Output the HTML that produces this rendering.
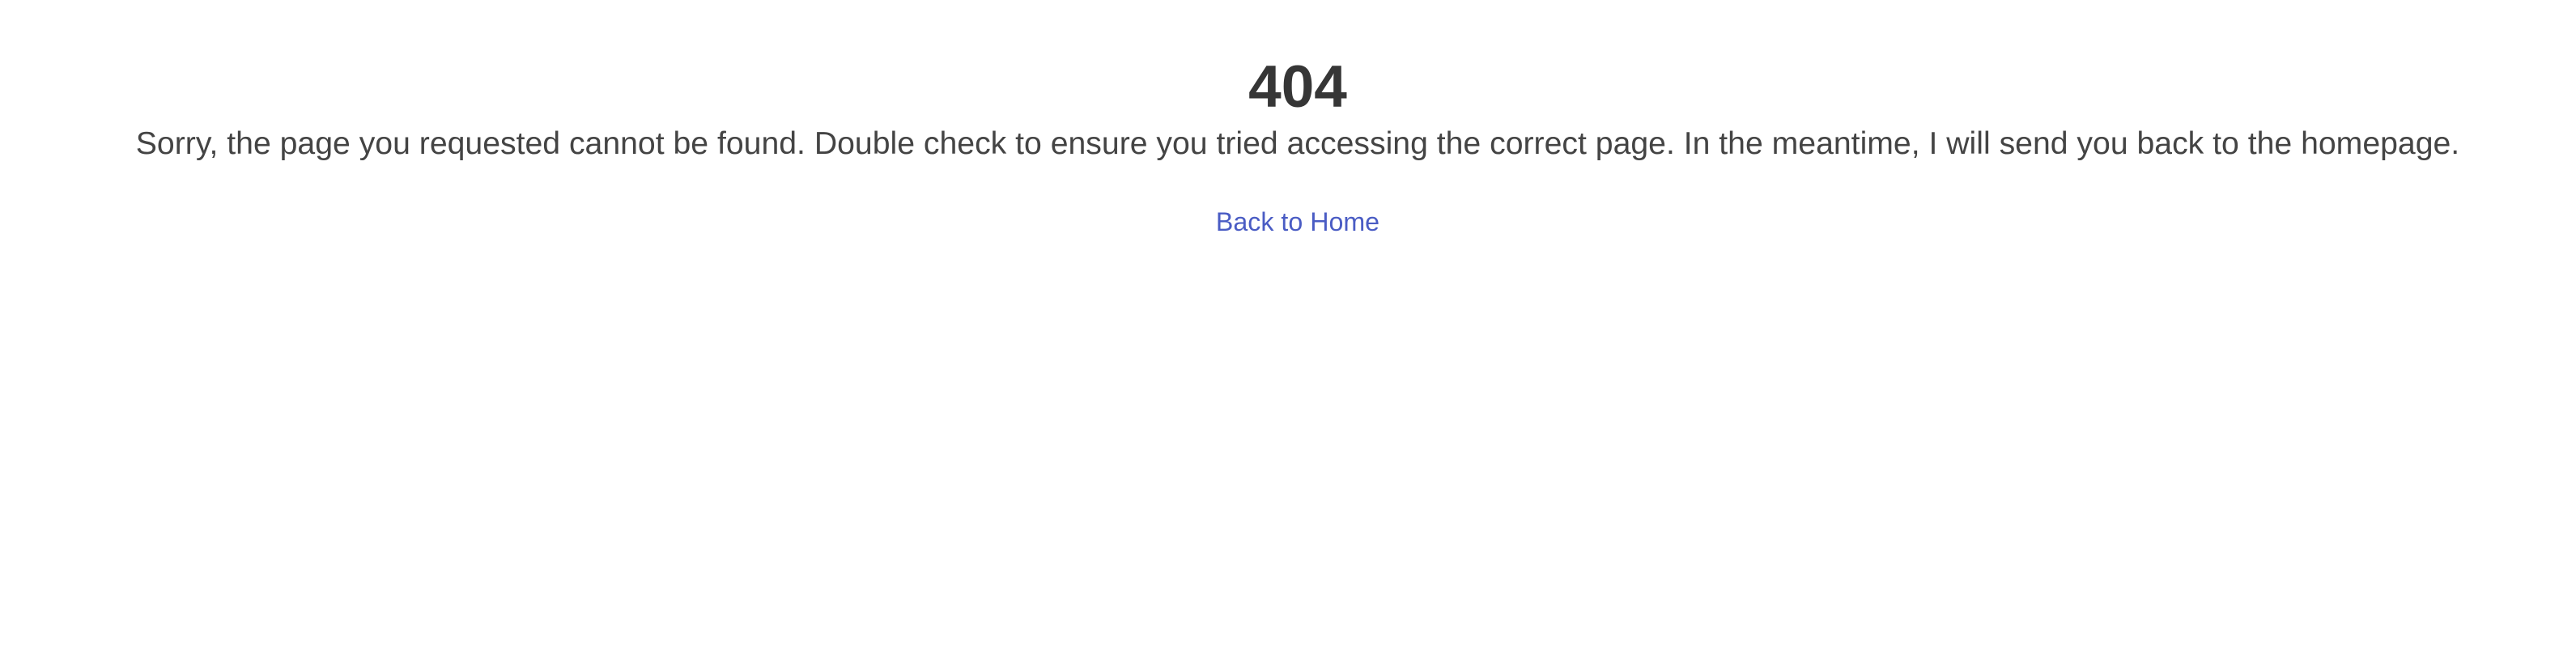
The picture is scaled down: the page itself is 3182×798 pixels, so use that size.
<!DOCTYPE html>
<html><head><style>
html,body{margin:0;padding:0;background:#fff;width:3182px;height:798px;overflow:hidden;font-family:"Liberation Sans",Arial,sans-serif;}
.c{position:absolute;left:12px;width:3182px;text-align:center;white-space:nowrap;}
h1{margin:0;font-size:73px;font-weight:bold;color:#363636;top:68px;line-height:80px;}
p{margin:0;font-size:39.2px;color:#444;top:153px;line-height:50px;}
a{font-size:32.2px;color:#4a5cc4;text-decoration:none;top:254px;line-height:40px;}
</style></head><body>
<h1 class="c">404</h1>
<p class="c">Sorry, the page you requested cannot be found. Double check to ensure you tried accessing the correct page. In the meantime, I will send you back to the homepage.</p>
<a class="c" href="#">Back to Home</a>
</body></html>
